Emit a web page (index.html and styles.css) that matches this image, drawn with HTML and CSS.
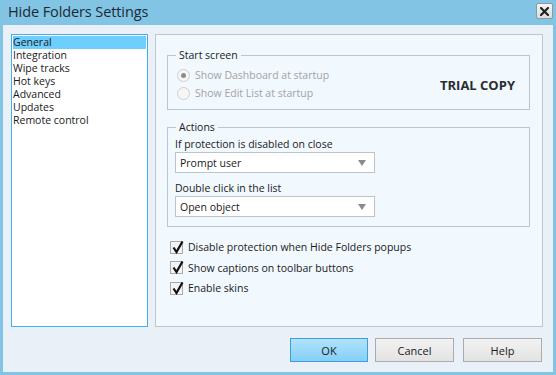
FILE: index.html
```html
<!DOCTYPE html>
<html>
<head>
<meta charset="utf-8">
<link rel="stylesheet" href="styles.css">
</head>
<body>
<div class="window">
  <div class="titlebar">
    <span class="title">Hide Folders Settings</span>
    <span class="close">
      <svg width="9" height="9" viewBox="0 0 9 9"><path d="M1 1L8 8M8 1L1 8" stroke="#222" stroke-width="2.2" stroke-linecap="square"/></svg>
    </span>
  </div>
  <div class="client">
    <div class="main">
      <ul class="nav">
        <li class="sel">General</li>
        <li>Integration</li>
        <li>Wipe tracks</li>
        <li>Hot keys</li>
        <li>Advanced</li>
        <li>Updates</li>
        <li>Remote control</li>
      </ul>
      <div class="panel">
        <fieldset class="group start">
          <legend>Start screen</legend>
          <div class="start-row">
            <div class="radios">
              <div class="radio-row"><span class="radio checked"></span>Show Dashboard at startup</div>
              <div class="radio-row"><span class="radio"></span>Show Edit List at startup</div>
            </div>
            <div class="trial">TRIAL COPY</div>
          </div>
        </fieldset>
        <fieldset class="group actions">
          <legend>Actions</legend>
          <div class="label">If protection is disabled on close</div>
          <div class="select"><span>Prompt user</span><span class="arrow"></span></div>
          <div class="label l2">Double click in the list</div>
          <div class="select"><span>Open object</span><span class="arrow"></span></div>
        </fieldset>
        <div class="checks">
          <div class="check-row"><span class="check"><svg width="13" height="13" viewBox="0 0 13 13"><path d="M2.5 6.5L5.5 11L11.5 0.5" fill="none" stroke="#111" stroke-width="2.2"/></svg></span>Disable protection when Hide Folders popups</div>
          <div class="check-row"><span class="check"><svg width="13" height="13" viewBox="0 0 13 13"><path d="M2.5 6.5L5.5 11L11.5 0.5" fill="none" stroke="#111" stroke-width="2.2"/></svg></span>Show captions on toolbar buttons</div>
          <div class="check-row"><span class="check"><svg width="13" height="13" viewBox="0 0 13 13"><path d="M2.5 6.5L5.5 11L11.5 0.5" fill="none" stroke="#111" stroke-width="2.2"/></svg></span>Enable skins</div>
        </div>
      </div>
    </div>
    <div class="footer">
      <button class="btn ok">OK</button>
      <button class="btn cancel">Cancel</button>
      <button class="btn help">Help</button>
    </div>
  </div>
</div>
</body>
</html>
```
FILE: styles.css
```css
* { box-sizing: border-box; }
html, body { margin: 0; padding: 0; }
body {
  font-family: "Open Sans", "Noto Sans", sans-serif;
  font-size: 10.5px;
  color: #1a1a1a;
  background: #fff;
}
.window {
  width: 556px;
  height: 375px;
  background: #81c4e4;
  padding: 0 3px 3px 3px;
  display: flex;
  flex-direction: column;
}
.titlebar {
  height: 25px;
  display: flex;
  align-items: center;
  justify-content: space-between;
  padding-left: 5px;
}
.title {
  font-size: 14.5px;
  color: #1d2a33;
  letter-spacing: -0.1px;
  margin-top: -2px;
}
.close {
  width: 17px;
  height: 16px;
  margin-top: -3px;
  border: 1px solid #8a9aa4;
  border-radius: 2px;
  background: linear-gradient(#f4f4f4, #dcdcdc);
  display: flex;
  align-items: center;
  justify-content: center;
}
.client {
  flex: 1;
  background: #e9f0f7;
  padding: 9px 10px 0 8px;
  display: flex;
  flex-direction: column;
}
.main {
  display: flex;
  gap: 7px;
  height: 293px;
}
.nav {
  list-style: none;
  margin: 0;
  padding: 1px 1px;
  width: 137px;
  background: #fff;
  border: 1px solid #3fb1ee;
}
.nav li {
  height: 13px;
  line-height: 13px;
  padding-left: 0;
  white-space: nowrap;
}
.nav li.sel { background: #6ecefd; }
.panel {
  flex: 1;
  background: #f1f8fe;
  border: 1px solid #bcc7cf;
  padding: 13px 12px 0 11px;
  display: flex;
  flex-direction: column;
}
.group {
  margin: 0;
  border: 1px solid #b9c8d0;
  padding: 0 7px;
  min-width: 0;
}
.group legend {
  padding: 0 3px;
  margin-left: 1px;
  line-height: 14px;
}
.start { height: 62px; padding-top: 0; }
.start-row {
  display: flex;
  align-items: center;
  justify-content: space-between;
  padding-top: 4px;
}
.radios { color: #a3a3a3; }
.radio-row {
  display: flex;
  align-items: center;
  height: 18px;
  margin-left: 2px;
}
.radio {
  width: 13px;
  height: 13px;
  border-radius: 50%;
  border: 1px solid #cfcfcf;
  background: #f6f6f6;
  margin-right: 5px;
  position: relative;
}
.radio.checked::after {
  content: "";
  position: absolute;
  left: 3px; top: 3px;
  width: 5px; height: 5px;
  border-radius: 50%;
  background: #8d8d8d;
}
.trial {
  font-weight: bold;
  font-size: 13px;
  color: #2a2d30;
  margin-right: 7px;
  margin-top: 2px;
}
.actions {
  margin-top: 10px;
  height: 107px;
}
.label { height: 16px; line-height: 16px; margin-top: 2px; }
.label.l2 { margin-top: 7px; }
.select {
  width: 200px;
  height: 21px;
  background: #fff;
  border: 1px solid #b9c4cb;
  display: flex;
  align-items: center;
  justify-content: space-between;
  padding: 0 8px 0 4px;
  margin-top: 0;
}
.arrow {
  width: 0; height: 0;
  border-left: 4px solid transparent;
  border-right: 4px solid transparent;
  border-top: 6px solid #8a8a8a;
}
.checks { margin-top: 10px; padding-left: 3px; }
.check-row {
  display: flex;
  align-items: center;
  height: 20.5px;
}
.check {
  width: 13px;
  height: 13px;
  border: 1px solid #a9a9a9;
  background: #f4f4f4;
  margin-right: 5px;
  position: relative;
  display: flex;
}
.check svg { position: absolute; left: 0; top: -1px; }
.footer {
  display: flex;
  justify-content: flex-end;
  padding-top: 11px;
}
.btn {
  width: 79px;
  height: 24px;
  font-family: "Open Sans", "Noto Sans", sans-serif;
  font-size: 11px;
  color: #1a1a1a;
  border: 1px solid #acacac;
  background: linear-gradient(#f2f2f2, #e3e3e3);
  padding: 0;
}
.btn.ok {
  width: 78px;
  margin-right: 7px;
  border-color: #3c9fd6;
  background: linear-gradient(#b2e2fb, #84d0f7);
}
.btn.cancel { margin-right: 9px; }
.btn.help { margin-right: 1px; }
```
